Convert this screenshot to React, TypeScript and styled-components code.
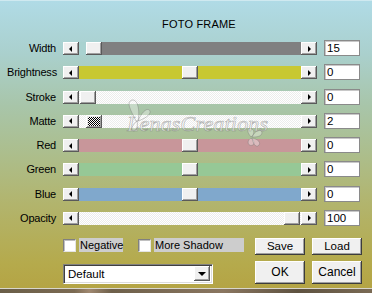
import React from "react";
import styled, { createGlobalStyle, css } from "styled-components";

const Global = createGlobalStyle`
  html, body { margin: 0; padding: 0; background: #b5a845; }
  body { font-family: "Liberation Sans", Arial, sans-serif; }
  * { box-sizing: border-box; }
`;

const raised = css`
  background: #f0f0f0;
  box-shadow: inset -1px -1px #5a5a5a, inset 1px 1px #ffffff, inset -2px -2px #a0a0a0;
`;

const dither = `repeating-conic-gradient(#ffffff 0 25%, #ececec 0 50%) 0 0 / 2px 2px`;

const Dialog = styled.div`
  position: relative;
  width: 372px;
  height: 293px;
  overflow: hidden;
  display: flex;
  flex-direction: column;
  border-top: 1px solid #cfe9f0;
  background: linear-gradient(180deg, #b0dbe6 0%, #aad0cd 18%, #a8c5a9 36%, #acbe8d 52%, #b2b46c 70%, #b5aa4c 90%, #b4a343 100%);
  font-family: "Liberation Sans", Arial, sans-serif;
  font-size: 11px;
  color: #000;
`;

const Title = styled.div`
  margin: 15px 0 0 162px;
  height: 16px;
  line-height: 16px;
  font-size: 11px;
  letter-spacing: 0.2px;
`;

const Grid = styled.div`
  margin: 8px 0 0 7px;
  display: grid;
  grid-template-columns: 49px 254px 36px;
  grid-auto-rows: 16px;
  column-gap: 7px;
  row-gap: 8.29px;
  align-items: center;
`;

const Label = styled.div`
  text-align: right;
  white-space: nowrap;
  line-height: 16px;
  letter-spacing: -0.2px;
`;

const Scroll = styled.div`
  display: flex;
  height: 13px;
  align-self: start;
  margin-top: 2px;
`;

const ArrowBtn = styled.div`
  ${raised};
  width: 16px;
  height: 13px;
  flex: none;
  display: flex;
  align-items: center;
  justify-content: center;
`;

const Tri = styled.span<{ $dir: "left" | "right" }>`
  width: 0;
  height: 0;
  border-top: 3px solid transparent;
  border-bottom: 3px solid transparent;
  ${(p) =>
    p.$dir === "left"
      ? css`border-right: 3px solid #000; margin-right: 1px;`
      : css`border-left: 3px solid #000; margin-left: 1px;`}
`;

const Track = styled.div<{ $bg: string }>`
  position: relative;
  flex: 1;
  height: 13px;
  background: ${(p) => p.$bg};
`;

const Thumb = styled.div<{ $checker?: boolean }>`
  position: absolute;
  top: 0;
  width: 16px;
  height: 13px;
  ${raised};
  ${(p) =>
    p.$checker &&
    css`
      background: repeating-conic-gradient(#000 0 25%, #fff 0 50%) 0 0 / 2px 2px;
      box-shadow: inset -1px -1px #5a5a5a, inset 1px 1px #ffffff, inset -2px -2px #a0a0a0, inset 2px 2px #e8e8e8;
    `}
`;

const Edit = styled.div`
  width: 36px;
  height: 16px;
  background: #fff;
  border: 1px solid #8a8a8a;
  box-shadow: inset 1px 1px #c8c8c8;
  padding-left: 2px;
  line-height: 14px;
  font-size: 11.5px;
`;

const Bottom = styled.div`
  margin: 12px 0 0 63px;
  display: flex;
  flex-direction: column;
  gap: 6px;
`;

const BRow = styled.div`
  display: flex;
  align-items: flex-start;
`;

const Check = styled.span`
  width: 13px;
  height: 13px;
  margin-top: 1px;
  background: #fff;
  border-top: 1px solid #808080;
  border-left: 1px solid #808080;
  border-right: 1px solid #e4e4e4;
  border-bottom: 1px solid #e4e4e4;
  box-shadow: inset 1px 1px #c0c0c0;
  flex: none;
`;

const CheckText = styled.span<{ $w: number }>`
  margin-left: 3px;
  width: ${(p) => p.$w}px;
  height: 14px;
  line-height: 14px;
  background: #cdcdcd;
  padding-left: 1px;
  white-space: nowrap;
`;

const CheckGroup = styled.label<{ $w: number }>`
  display: flex;
  width: ${(p) => p.$w}px;
  flex: none;
`;

const Btn = styled.div<{ $h: number; $w: number; $big?: boolean }>`
  ${raised};
  box-shadow: inset -1px -1px #3c3c3c, inset 1px 1px #ffffff, inset -2px -2px #a0a0a0;
  width: ${(p) => p.$w}px;
  height: ${(p) => p.$h}px;
  display: flex;
  align-items: center;
  justify-content: center;
  font-size: ${(p) => (p.$big ? 12 : 11.5)}px;
  flex: none;
`;

const BtnGap = styled.div`
  display: flex;
  gap: 7px;
`;

const Select = styled.div`
  margin-top: 3px;
  width: 150px;
  height: 20px;
  flex: none;
  background: #fff;
  border-top: 1px solid #808080;
  border-left: 1px solid #808080;
  border-right: 1px solid #ffffff;
  border-bottom: 1px solid #ffffff;
  box-shadow: inset 1px 1px #404040, inset -1px -1px #dcdcdc;
  display: flex;
  align-items: center;
  justify-content: space-between;
  padding: 0 2px 0 4px;
  font-size: 11.5px;
  margin-right: 42px;
`;

const SelBtn = styled.div`
  ${raised};
  width: 16px;
  height: 15px;
  display: flex;
  align-items: center;
  justify-content: center;
`;

const Down = styled.span`
  width: 0;
  height: 0;
  border-left: 4px solid transparent;
  border-right: 4px solid transparent;
  border-top: 4px solid #000;
  margin-top: 1px;
`;

const Strip = styled.div`
  margin-top: auto;
  height: 5px;
  border-top: 1px solid #d8d6cc;
  background: linear-gradient(90deg, #6a5e48 0%, #7b6a52 20%, #a08870 24%, #6e604a 30%, #8a7660 60%, #5e5240 80%, #7a6a54 100%);
`;

const Watermark = styled.div`
  position: absolute;
  left: 96px;
  top: 96px;
  width: 180px;
  height: 54px;
  pointer-events: none;
`;

const WmText = styled.span`
  position: absolute;
  left: 31px;
  top: 14px;
  font-family: "Liberation Serif", "DejaVu Serif", serif;
  font-style: italic;
  font-size: 22px;
  letter-spacing: 0.2px;
  color: rgba(255, 255, 255, 0.55);
  -webkit-text-stroke: 0.7px rgba(110, 110, 110, 0.5);
  white-space: nowrap;
`;

const WmArt = styled.svg`
  position: absolute;
  left: 0;
  top: 0;
`;

type Row = {
  label: string;
  value: string;
  bg: string;
  pos: number;
  gap?: string;
  checker?: boolean;
};

const rows: Row[] = [
  { label: "Width", value: "15", bg: "#808080", pos: 7, gap: "#a9d2d0" },
  { label: "Brightness", value: "0", bg: "#c8c832", pos: 103 },
  { label: "Stroke", value: "0", bg: dither, pos: 1 },
  { label: "Matte", value: "2", bg: dither, pos: 7, checker: true },
  { label: "Red", value: "0", bg: "#c8969a", pos: 103 },
  { label: "Green", value: "0", bg: "#96c896", pos: 103 },
  { label: "Blue", value: "0", bg: "#80a8cc", pos: 103 },
  { label: "Opacity", value: "100", bg: dither, pos: 205 },
];

export default function App() {
  return (
    <>
      <Global />
      <Dialog>
        <Title>FOTO FRAME</Title>
        <Grid>
          {rows.map((r) => (
            <React.Fragment key={r.label}>
              <Label>{r.label}</Label>
              <Scroll>
                <ArrowBtn>
                  <Tri $dir="left" />
                </ArrowBtn>
                <Track
                  $bg={
                    r.gap
                      ? `linear-gradient(90deg, ${r.gap} 0 ${r.pos}px, ${r.bg} ${r.pos}px)`
                      : r.bg
                  }
                >
                  <Thumb $checker={r.checker} style={{ left: r.pos }} />
                </Track>
                <ArrowBtn>
                  <Tri $dir="right" />
                </ArrowBtn>
              </Scroll>
              <Edit>{r.value}</Edit>
            </React.Fragment>
          ))}
        </Grid>
        <Bottom>
          <BRow>
            <CheckGroup $w={75}>
              <Check />
              <CheckText $w={44}>Negative</CheckText>
            </CheckGroup>
            <CheckGroup $w={117}>
              <Check />
              <CheckText $w={90}>More Shadow</CheckText>
            </CheckGroup>
            <BtnGap>
              <Btn $w={50} $h={17}>Save</Btn>
              <Btn $w={50} $h={17}>Load</Btn>
            </BtnGap>
          </BRow>
          <BRow>
            <Select>
              <span>Default</span>
              <SelBtn>
                <Down />
              </SelBtn>
            </Select>
            <BtnGap>
              <Btn $w={50} $h={23} $big>OK</Btn>
              <Btn $w={50} $h={23} $big>Cancel</Btn>
            </BtnGap>
          </BRow>
        </Bottom>
        <Strip />
        <Watermark>
          <WmArt width="180" height="54" viewBox="0 0 180 54">
            <g fill="rgba(255,255,255,0.35)" stroke="rgba(120,120,120,0.5)" strokeWidth="0.8">
              <path d="M40 24 C34 12 30 5 36 3 C42 2 44 14 42 24 Z" />
              <path d="M42 24 C46 14 52 10 54 14 C55 18 48 22 42 24 Z" />
              <path d="M41 24 C36 28 34 34 38 34 C41 33 42 28 41 24 Z" />
              <path d="M155 40 C150 34 151 30 156 32 C159 34 158 38 155 40 Z" />
              <path d="M156 40 C160 32 166 32 166 36 C165 40 160 40 156 40 Z" />
              <path d="M155 41 C150 44 152 50 157 48 C159 46 158 43 155 41 Z" />
              <path d="M156 41 C162 42 166 46 162 49 C159 50 157 46 156 41 Z" />
            </g>
          </WmArt>
          <WmText>LenasCreations</WmText>
        </Watermark>
      </Dialog>
    </>
  );
}
